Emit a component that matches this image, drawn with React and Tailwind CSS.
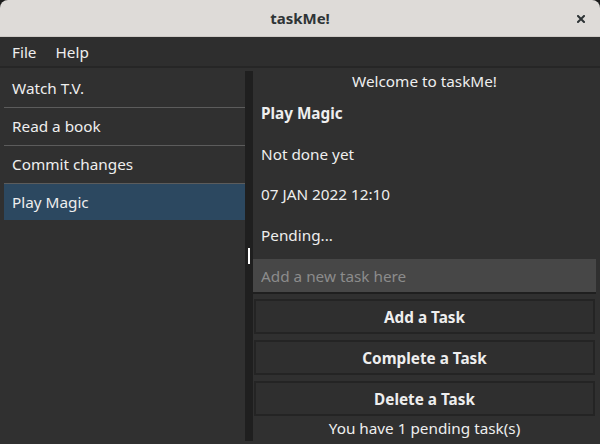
import React, { useState } from 'react';

const tasks = ['Watch T.V.', 'Read a book', 'Commit changes', 'Play Magic'];

function TaskMeApp() {
  const [selected, setSelected] = useState(3);
  const [newTask, setNewTask] = useState('');

  return (
    <div
      className="w-[600px] h-[444px] bg-[#1c1c1c] flex flex-col overflow-hidden text-[15.3px] text-[#eeeeee]"
      style={{ fontFamily: '"Noto Sans", "Open Sans", sans-serif' }}
    >
      {/* title bar */}
      <div className="h-[37px] shrink-0 bg-[#dedbd8] rounded-t-[8px] border-b border-[#cdc9c5] relative flex items-center justify-center pt-[1px]">
        <span className="text-[#2e3436] font-bold text-[15px]">taskMe!</span>
        <svg className="absolute right-[15px] top-[15px]" width="8" height="8" viewBox="0 0 8 8">
          <path d="M1 1 L7 7 M7 1 L1 7" stroke="#2e3436" strokeWidth="2" strokeLinecap="square" />
        </svg>
      </div>

      {/* menu */}
      <div className="h-[31px] shrink-0 bg-[#2e2e2e] border-b-2 border-[#262626] flex items-center gap-[19px] pl-[12px] pt-[1px]">
        <span>File</span>
        <span>Help</span>
      </div>

      <div className="flex-1 bg-[#303030] flex pl-[4px] pr-[4px] pt-[2px] pb-[3px]">
        {/* list */}
        <div className="w-[241px] flex flex-col">
          {tasks.map((t, i) => (
            <div
              key={t}
              onClick={() => setSelected(i)}
              className={`flex items-center pl-[8px] ${
                i === selected ? 'bg-[#2c4860]' : ''
              } ${i < tasks.length - 1 ? 'h-[38px] border-b border-[#5c5c5c]' : 'h-[36px]'}`}
            >
              {t}
            </div>
          ))}
        </div>

        {/* splitter */}
        <div className="w-[8px] mt-[1px] bg-[#1f1f1f] flex flex-col items-start pt-[177px] pl-[3px]">
          <div className="w-[2px] h-[16px] bg-white" />
        </div>

        {/* detail */}
        <div className="flex-1 flex flex-col">
          <div className="h-[22px] flex items-center justify-center">Welcome to taskMe!</div>
          <div className="h-[41px] flex items-center pl-[8px] pt-[2px] font-bold">{tasks[selected]}</div>
          <div className="h-[41px] flex items-center pl-[8px] pt-[2px]">Not done yet</div>
          <div className="h-[41px] flex items-center pl-[8px]">07 JAN 2022 12:10</div>
          <div className="h-[41px] flex items-center pl-[8px]">Pending...</div>
          <input
            value={newTask}
            onChange={(e) => setNewTask(e.target.value)}
            placeholder="Add a new task here"
            className="mt-[3px] h-[35px] bg-[#474747] border-b-2 border-[#1f1f1f] pl-[8px] outline-none placeholder:text-[#8c8c8c]"
          />
          <div className="flex flex-col gap-[6px] mt-[5px] px-[1px]">
            <button className="h-[35px] border-2 border-[#242424] bg-[#2f2f2f] font-bold pt-[1px]">Add a Task</button>
            <button className="h-[35px] border-2 border-[#242424] bg-[#2f2f2f] font-bold pt-[1px]">Complete a Task</button>
            <button className="h-[35px] border-2 border-[#242424] bg-[#2f2f2f] font-bold pt-[1px]">Delete a Task</button>
          </div>
          <div className="flex-1 flex items-center justify-center">You have 1 pending task(s)</div>
        </div>
      </div>
    </div>
  );
}

export default TaskMeApp;
